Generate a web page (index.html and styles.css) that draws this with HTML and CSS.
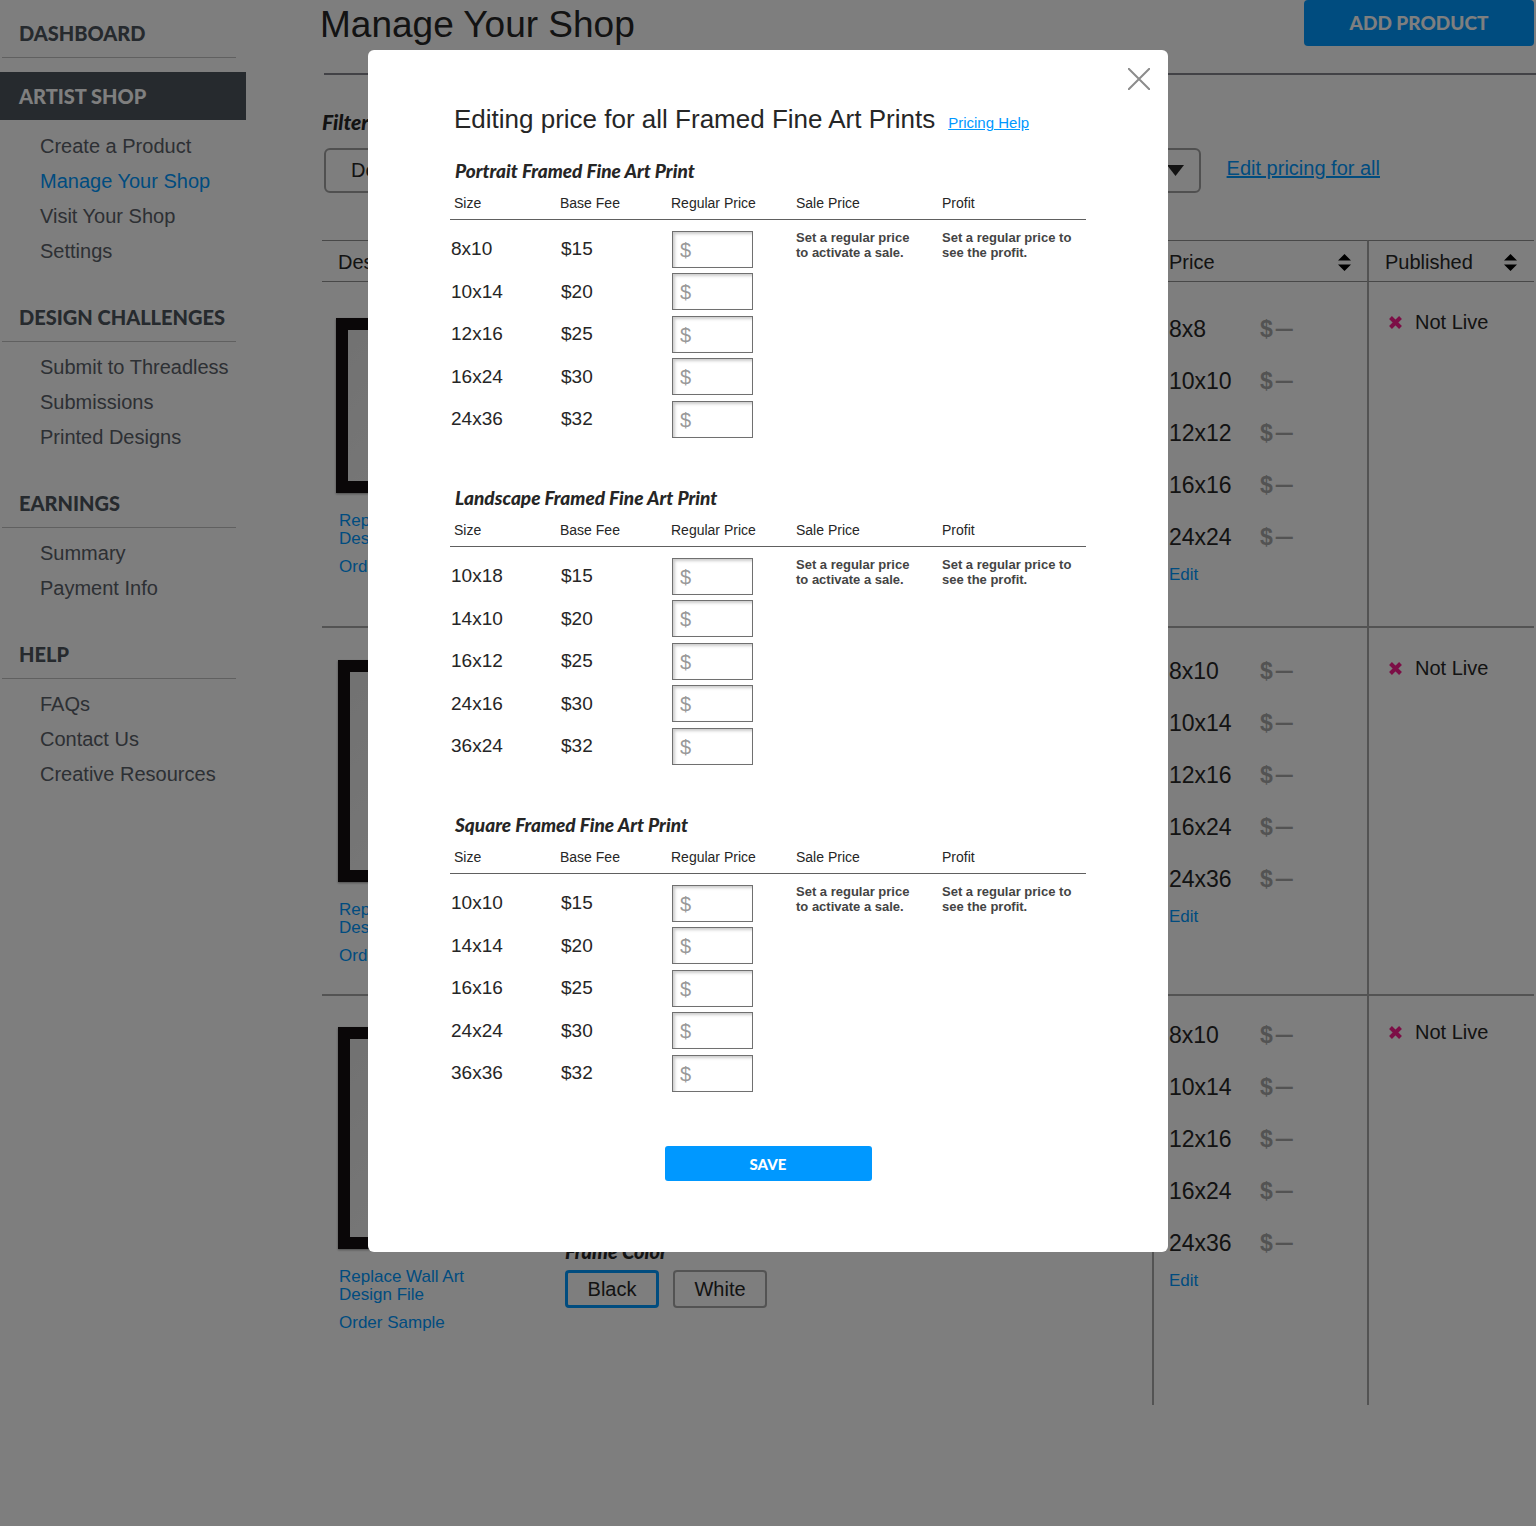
FILE: index.html
```html
<!DOCTYPE html>
<html lang="en">
<head>
<meta charset="utf-8">
<meta name="viewport" content="width=device-width, initial-scale=1">
<title>Manage Your Shop</title>
<link rel="stylesheet" href="styles.css">
</head>
<body>
<svg class="sprite" width="0" height="0" aria-hidden="true">
  <symbol id="sort" viewBox="0 0 13 17"><path d="M6.500 0L13 6.500H0zM0 10.500h13L6.500 17z"/></symbol>
  <symbol id="cross" viewBox="0 0 13 13"><path d="M1.500 1.500l10 10M11.500 1.500l-10 10" fill="none" stroke="currentColor" stroke-width="4"/></symbol>
</svg>
<div class="page">
  <nav class="sidebar" aria-label="Account">
    <h2 class="nav-title">DASHBOARD</h2>
    <h2 class="nav-title nav-title-active">ARTIST SHOP</h2>
    <ul class="nav-list">
      <li><a href="#">Create a Product</a></li>
      <li><a href="#" class="current">Manage Your Shop</a></li>
      <li><a href="#">Visit Your Shop</a></li>
      <li><a href="#">Settings</a></li>
    </ul>
    <h2 class="nav-title">DESIGN CHALLENGES</h2>
    <ul class="nav-list">
      <li><a href="#">Submit to Threadless</a></li>
      <li><a href="#">Submissions</a></li>
      <li><a href="#">Printed Designs</a></li>
    </ul>
    <h2 class="nav-title">EARNINGS</h2>
    <ul class="nav-list">
      <li><a href="#">Summary</a></li>
      <li><a href="#">Payment Info</a></li>
    </ul>
    <h2 class="nav-title">HELP</h2>
    <ul class="nav-list">
      <li><a href="#">FAQs</a></li>
      <li><a href="#">Contact Us</a></li>
      <li><a href="#">Creative Resources</a></li>
    </ul>
  </nav>

  <main class="main">
    <header class="page-head">
      <h1>Manage Your Shop</h1>
      <button type="button" class="add-button">ADD PRODUCT</button>
    </header>

    <section class="content">
      <h2 class="filter-title">Filter</h2>
      <div class="filters">
        <div class="select-box">
          <select aria-label="Design"><option>Design</option></select>
          <svg width="17" height="11" viewBox="0 0 17 11"><path d="M0 0h17L8.500 11z"/></svg>
        </div>
        <div class="select-box">
          <select aria-label="Product"><option>Product</option></select>
          <svg width="17" height="11" viewBox="0 0 17 11"><path d="M0 0h17L8.500 11z"/></svg>
        </div>
        <a href="#" class="edit-all">Edit pricing for all</a>
      </div>

      <table class="products">
        <thead>
          <tr>
            <th class="col-design" scope="col">Design</th>
            <th class="col-details" scope="col">Details</th>
            <th class="col-price" scope="col"><div class="sort-head">Price <svg width="13" height="17"><use href="#sort"/></svg></div></th>
            <th class="col-status" scope="col"><div class="sort-head">Published <svg width="13" height="17"><use href="#sort"/></svg></div></th>
          </tr>
        </thead>
        <tbody>
          <tr class="product square">
            <td class="design">
              <div class="frame"></div>
              <a href="#">Replace Wall Art<br>Design File</a>
              <a href="#">Order Sample</a>
            </td>
            <td class="details"></td>
            <td class="price">
              <dl>
                <dt>8x8</dt><dd>$<span>—</span></dd>
                <dt>10x10</dt><dd>$<span>—</span></dd>
                <dt>12x12</dt><dd>$<span>—</span></dd>
                <dt>16x16</dt><dd>$<span>—</span></dd>
                <dt>24x24</dt><dd>$<span>—</span></dd>
              </dl>
              <a href="#">Edit</a>
            </td>
            <td class="status"><div><svg width="13" height="13"><use href="#cross"/></svg>Not Live</div></td>
          </tr>
          <tr class="product landscape">
            <td class="design">
              <div class="frame"></div>
              <a href="#">Replace Wall Art<br>Design File</a>
              <a href="#">Order Sample</a>
            </td>
            <td class="details"></td>
            <td class="price">
              <dl>
                <dt>8x10</dt><dd>$<span>—</span></dd>
                <dt>10x14</dt><dd>$<span>—</span></dd>
                <dt>12x16</dt><dd>$<span>—</span></dd>
                <dt>16x24</dt><dd>$<span>—</span></dd>
                <dt>24x36</dt><dd>$<span>—</span></dd>
              </dl>
              <a href="#">Edit</a>
            </td>
            <td class="status"><div><svg width="13" height="13"><use href="#cross"/></svg>Not Live</div></td>
          </tr>
          <tr class="product portrait">
            <td class="design">
              <div class="frame"></div>
              <a href="#">Replace Wall Art<br>Design File</a>
              <a href="#">Order Sample</a>
            </td>
            <td class="details">
              <h3>Frame Color</h3>
              <div class="swatches">
                <button type="button" class="selected" aria-pressed="true">Black</button>
                <button type="button" aria-pressed="false">White</button>
              </div>
            </td>
            <td class="price">
              <dl>
                <dt>8x10</dt><dd>$<span>—</span></dd>
                <dt>10x14</dt><dd>$<span>—</span></dd>
                <dt>12x16</dt><dd>$<span>—</span></dd>
                <dt>16x24</dt><dd>$<span>—</span></dd>
                <dt>24x36</dt><dd>$<span>—</span></dd>
              </dl>
              <a href="#">Edit</a>
            </td>
            <td class="status"><div><svg width="13" height="13"><use href="#cross"/></svg>Not Live</div></td>
          </tr>
        </tbody>
      </table>
    </section>
  </main>
</div>

<div class="overlay">
  <form class="modal" role="dialog" aria-modal="true" aria-labelledby="modal-title">
    <button type="button" class="close" aria-label="Close">
      <svg width="22" height="22" viewBox="0 0 22 22"><path d="M0 0l22 22M22 0L0 22" fill="none" stroke="#8c8c8c" stroke-width="2"/></svg>
    </button>
    <div class="modal-head">
      <h2 id="modal-title">Editing price for all Framed Fine Art Prints</h2>
      <a href="#">Pricing Help</a>
    </div>

    <section class="group">
      <h3>Portrait Framed Fine Art Print</h3>
      <table>
        <thead><tr><th scope="col">Size</th><th scope="col">Base Fee</th><th scope="col">Regular Price</th><th scope="col">Sale Price</th><th scope="col">Profit</th></tr></thead>
        <tbody>
          <tr><td>8x10</td><td>$15</td><td><input type="text" placeholder="$" aria-label="Regular price, portrait 8x10"></td><td rowspan="5" class="note">Set a regular price to activate a sale.</td><td rowspan="5" class="note">Set a regular price to see the profit.</td></tr>
          <tr><td>10x14</td><td>$20</td><td><input type="text" placeholder="$" aria-label="Regular price, portrait 10x14"></td></tr>
          <tr><td>12x16</td><td>$25</td><td><input type="text" placeholder="$" aria-label="Regular price, portrait 12x16"></td></tr>
          <tr><td>16x24</td><td>$30</td><td><input type="text" placeholder="$" aria-label="Regular price, portrait 16x24"></td></tr>
          <tr><td>24x36</td><td>$32</td><td><input type="text" placeholder="$" aria-label="Regular price, portrait 24x36"></td></tr>
        </tbody>
      </table>
    </section>

    <section class="group">
      <h3>Landscape Framed Fine Art Print</h3>
      <table>
        <thead><tr><th scope="col">Size</th><th scope="col">Base Fee</th><th scope="col">Regular Price</th><th scope="col">Sale Price</th><th scope="col">Profit</th></tr></thead>
        <tbody>
          <tr><td>10x18</td><td>$15</td><td><input type="text" placeholder="$" aria-label="Regular price, landscape 10x18"></td><td rowspan="5" class="note">Set a regular price to activate a sale.</td><td rowspan="5" class="note">Set a regular price to see the profit.</td></tr>
          <tr><td>14x10</td><td>$20</td><td><input type="text" placeholder="$" aria-label="Regular price, landscape 14x10"></td></tr>
          <tr><td>16x12</td><td>$25</td><td><input type="text" placeholder="$" aria-label="Regular price, landscape 16x12"></td></tr>
          <tr><td>24x16</td><td>$30</td><td><input type="text" placeholder="$" aria-label="Regular price, landscape 24x16"></td></tr>
          <tr><td>36x24</td><td>$32</td><td><input type="text" placeholder="$" aria-label="Regular price, landscape 36x24"></td></tr>
        </tbody>
      </table>
    </section>

    <section class="group">
      <h3>Square Framed Fine Art Print</h3>
      <table>
        <thead><tr><th scope="col">Size</th><th scope="col">Base Fee</th><th scope="col">Regular Price</th><th scope="col">Sale Price</th><th scope="col">Profit</th></tr></thead>
        <tbody>
          <tr><td>10x10</td><td>$15</td><td><input type="text" placeholder="$" aria-label="Regular price, square 10x10"></td><td rowspan="5" class="note">Set a regular price to activate a sale.</td><td rowspan="5" class="note">Set a regular price to see the profit.</td></tr>
          <tr><td>14x14</td><td>$20</td><td><input type="text" placeholder="$" aria-label="Regular price, square 14x14"></td></tr>
          <tr><td>16x16</td><td>$25</td><td><input type="text" placeholder="$" aria-label="Regular price, square 16x16"></td></tr>
          <tr><td>24x24</td><td>$30</td><td><input type="text" placeholder="$" aria-label="Regular price, square 24x24"></td></tr>
          <tr><td>36x36</td><td>$32</td><td><input type="text" placeholder="$" aria-label="Regular price, square 36x36"></td></tr>
        </tbody>
      </table>
    </section>

    <button type="submit" class="save">SAVE</button>
  </form>
</div>
</body>
</html>
```

FILE: styles.css
```css
* { box-sizing: border-box; }

body {
  position: relative;
  min-height: 100vh;
  margin: 0;
  background: #fcfcfc;
  color: #262626;
  font: 20px/24px "Liberation Sans", Arial, sans-serif;
}

h1, h2, h3, ul, dl, dd { margin: 0; padding: 0; }
h1, h2 { font-weight: 400; }
a { color: #0098ff; text-decoration: none; }
button, input, select { font: inherit; color: inherit; }
button { cursor: pointer; }
.sprite { display: none; }

.page { display: flex; gap: 74px; }

/* Sidebar */
.sidebar { flex: none; width: 246px; padding-top: 17px; }

.nav-title {
  margin: 0 10px 8px 2px;
  padding: 0 0 8px 17px;
  border-bottom: 1px solid #c0c0c0;
  color: #4c545c;
  font: 900 20px/32px Lato, sans-serif;
}
.nav-title-active {
  margin: 14px 0 9px;
  padding: 8px 19px;
  border: 0;
  background: #4c545c;
  color: #fff;
}
.nav-list { margin-bottom: 32px; padding-left: 40px; list-style: none; }
.nav-list a { display: block; color: #5a6068; line-height: 35px; }
.nav-list .current { color: #0098ff; }

/* Main column */
.main { flex: 1; min-width: 0; }

.page-head {
  display: flex;
  justify-content: space-between;
  height: 75px;
  margin-left: 4px;
  padding-right: 2px;
  border-bottom: 2px solid #85858c;
}
.page-head h1 { margin-left: -4px; font-size: 37px; line-height: 50px; }
.add-button {
  width: 230px;
  height: 46px;
  padding: 0;
  border: 0;
  border-radius: 4px;
  background: #0098ff;
  color: #fff;
  font: 900 19px/24px Lato, sans-serif;
}

.content { padding: 35px 2px 0; }
.filter-title { font: italic 900 21px/24px Lato, sans-serif; }
.filters {
  display: flex;
  align-items: center;
  gap: 20px;
  margin: 14px 154px 47px 2px;
}
.select-box { display: flex; flex: 1; align-items: center; position: relative; }
.select-box select {
  width: 100%;
  height: 45px;
  padding: 0 48px 2px 25px;
  border: 2px solid #a0a0a0;
  border-radius: 6px;
  background: none;
  appearance: none;
}
.select-box svg { position: absolute; right: 17px; fill: #262626; }
.edit-all { margin-left: 6px; padding-bottom: 5px; text-decoration: underline; }

/* Product table */
.products { width: 100%; border-collapse: separate; border-spacing: 0; table-layout: fixed; }
.products th {
  height: 42px;
  padding: 2px 16px 0;
  border: solid #909090;
  border-width: 1px 0;
  font-weight: 400;
  text-align: left;
}
.products td { padding: 0 16px; border-bottom: 2px solid #a6a6a6; vertical-align: top; }
.products tr:last-child td { border-bottom: 0; }
.col-design { width: 227px; }
.products .col-price { width: 215px; border-left: 2px solid #a6a6a6; }
.products .col-status { width: 167px; padding-right: 17px; border-left: 2px solid #a6a6a6; }
.products .price, .products .status { border-left: 2px solid #a6a6a6; }
.products .price, .products .col-price { padding-left: 15px; }
.sort-head { display: flex; align-items: center; justify-content: space-between; }

.square { --art-top: 36px; --price-top: 21px; --status-top: 28px; height: 346px; }
.landscape { --art-top: 32px; --price-top: 17px; --status-top: 28px; height: 368px; }
.portrait { --art-top: 31px; --price-top: 13px; --status-top: 24px; height: 409px; }

.products .design { padding-top: var(--art-top); font-size: 17px; line-height: 18px; }
.design a { display: block; margin: 0 0 10px 1px; }
.frame {
  width: 174px;
  height: 222px;
  margin-bottom: 19px;
  border: 12px solid #140f10;
  background: linear-gradient(135deg, #e4e4e4, #f2f2f2);
  box-shadow: 0 1px 2px #999;
}
.square .frame { height: 175px; margin-left: -2px; }

.products .price { padding-top: var(--price-top); }
.price dl { display: grid; grid-template-columns: 91px 1fr; font-size: 23px; line-height: 52px; }
.price dd { display: flex; gap: 3px; padding-top: 1px; color: #a6a6a6; font-weight: 700; line-height: 51px; }
.price dd span { font: 800 17px/51px Inter, sans-serif; }
.price a { display: block; margin-top: 3px; font-size: 17px; line-height: 18px; }

.products .status { padding: var(--status-top) 0 0 20px; }
.status div { display: flex; align-items: center; gap: 13px; }
.status svg { color: #f81c8c; }

.products .portrait .details { padding-bottom: 97px; vertical-align: bottom; }
.details h3 { font: italic 900 20px/24px Lato, sans-serif; }
.swatches { display: flex; gap: 14px; margin-top: 7px; }
.swatches button {
  width: 94px;
  height: 38px;
  padding: 0;
  border: 2px solid #a6a6a6;
  border-radius: 4px;
  background: none;
}
.swatches .selected { border: 3px solid #0098ff; }

/* Price editor */
.overlay {
  position: absolute;
  inset: 0;
  padding: 50px 16px;
  background: rgba(0, 0, 0, .5);
}
.modal {
  position: relative;
  max-width: 800px;
  margin: 0 auto;
  padding: 53px 82px 71px;
  border-radius: 6px;
  background: #fff;
}
.close {
  position: absolute;
  top: 18px;
  right: 18px;
  padding: 0;
  border: 0;
  background: none;
}
.close svg { display: block; }
.modal-head { display: flex; align-items: baseline; gap: 13px; padding-left: 4px; }
.modal-head h2 { font-size: 26px; line-height: 32px; }
.modal-head a { font-size: 15px; text-decoration: underline; }

.group { margin: 26px 0 48px; }
.group + .group { margin-top: 0; }
.group h3 { padding: 0 5px 6px; font: italic 900 19px/20px Lato, sans-serif; }
.group table { width: 100%; border-spacing: 0; table-layout: fixed; }
.group th {
  height: 33px;
  padding: 0;
  border-bottom: 1px solid #606060;
  font-size: 14px;
  font-weight: 400;
  line-height: 16px;
  text-align: left;
}
.group th:first-child { width: 110px; padding-left: 4px; }
.group th:nth-child(2) { width: 111px; }
.group th:nth-child(3) { width: 125px; }
.group th:nth-child(4) { width: 146px; }
.group td { height: 42px; padding: 0 0 0 1px; font-size: 19px; }
.group tr:nth-child(even) td { height: 43px; }
.group tr:first-child td { height: 50px; padding-top: 8px; }
.group input {
  display: block;
  width: 81px;
  height: 37px;
  padding: 2px 7px 0;
  border: 1px solid #707070;
  background: #fff;
  box-shadow: inset 2px 2px 3px #ccc;
  font-size: 20px;
}
.group input::placeholder { color: #999; opacity: 1; }
.group tr:first-child .note {
  padding: 10px 28px 0 0;
  color: #444;
  font-size: 13px;
  font-weight: 700;
  line-height: 15px;
  vertical-align: top;
}
.group tr:first-child .note + .note { padding-right: 10px; }

.save {
  display: block;
  width: 207px;
  height: 35px;
  margin: 52px auto 0;
  padding: 0;
  border: 0;
  border-radius: 3px;
  background: #0098ff;
  color: #fff;
  font: 900 15px/18px Lato, sans-serif;
}
```
